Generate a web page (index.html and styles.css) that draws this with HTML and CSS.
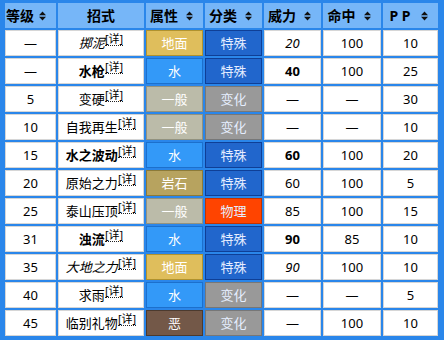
FILE: index.html
```html
<!DOCTYPE html>
<html lang="zh">
<head>
<meta charset="utf-8">
<link rel="stylesheet" href="styles.css">
</head>
<body>
<table class="moves">
<colgroup>
<col class="c1"><col class="c2"><col class="c3"><col class="c4"><col class="c5"><col class="c6"><col class="c7">
</colgroup>
<thead>
<tr>
<th><div class="hd"><span class="ht">等级</span><svg class="sort" viewBox="0 0 7 10" width="7" height="10"><path d="M0 4.3L3.5 0.5L7 4.3Z M0 5.7L3.5 9.5L7 5.7Z"/></svg></div></th>
<th><div class="hd plain"><span class="ht">招式</span></div></th>
<th><div class="hd"><span class="ht">属性</span><svg class="sort" viewBox="0 0 7 10" width="7" height="10"><path d="M0 4.3L3.5 0.5L7 4.3Z M0 5.7L3.5 9.5L7 5.7Z"/></svg></div></th>
<th><div class="hd"><span class="ht">分类</span><svg class="sort" viewBox="0 0 7 10" width="7" height="10"><path d="M0 4.3L3.5 0.5L7 4.3Z M0 5.7L3.5 9.5L7 5.7Z"/></svg></div></th>
<th><div class="hd"><span class="ht">威力</span><svg class="sort" viewBox="0 0 7 10" width="7" height="10"><path d="M0 4.3L3.5 0.5L7 4.3Z M0 5.7L3.5 9.5L7 5.7Z"/></svg></div></th>
<th><div class="hd"><span class="ht">命中</span><svg class="sort" viewBox="0 0 7 10" width="7" height="10"><path d="M0 4.3L3.5 0.5L7 4.3Z M0 5.7L3.5 9.5L7 5.7Z"/></svg></div></th>
<th><div class="hd"><span class="ht pp">P P</span><svg class="sort" viewBox="0 0 7 10" width="7" height="10"><path d="M0 4.3L3.5 0.5L7 4.3Z M0 5.7L3.5 9.5L7 5.7Z"/></svg></div></th>
</tr>
</thead>
<tbody>
<tr><td>—</td><td><i>掷泥</i><span class="det">[详]</span></td><td class="t ground">地面</td><td class="k special">特殊</td><td><i>20</i></td><td>100</td><td>10</td></tr>
<tr><td>—</td><td><b>水枪</b><span class="det">[详]</span></td><td class="t water">水</td><td class="k special">特殊</td><td><b>40</b></td><td>100</td><td>25</td></tr>
<tr><td>5</td><td>变硬<span class="det">[详]</span></td><td class="t normal">一般</td><td class="k status">变化</td><td>—</td><td>—</td><td>30</td></tr>
<tr><td>10</td><td>自我再生<span class="det">[详]</span></td><td class="t normal">一般</td><td class="k status">变化</td><td>—</td><td>—</td><td>10</td></tr>
<tr><td>15</td><td><b>水之波动</b><span class="det">[详]</span></td><td class="t water">水</td><td class="k special">特殊</td><td><b>60</b></td><td>100</td><td>20</td></tr>
<tr><td>20</td><td>原始之力<span class="det">[详]</span></td><td class="t rock">岩石</td><td class="k special">特殊</td><td>60</td><td>100</td><td>5</td></tr>
<tr><td>25</td><td>泰山压顶<span class="det">[详]</span></td><td class="t normal">一般</td><td class="k physical">物理</td><td>85</td><td>100</td><td>15</td></tr>
<tr><td>31</td><td><b>浊流</b><span class="det">[详]</span></td><td class="t water">水</td><td class="k special">特殊</td><td><b>90</b></td><td>85</td><td>10</td></tr>
<tr><td>35</td><td><i>大地之力</i><span class="det">[详]</span></td><td class="t ground">地面</td><td class="k special">特殊</td><td><i>90</i></td><td>100</td><td>10</td></tr>
<tr><td>40</td><td>求雨<span class="det">[详]</span></td><td class="t water">水</td><td class="k status">变化</td><td>—</td><td>—</td><td>5</td></tr>
<tr><td>45</td><td>临别礼物<span class="det">[详]</span></td><td class="t dark">恶</td><td class="k status">变化</td><td>—</td><td>100</td><td>10</td></tr>
</tbody>
</table>
</body>
</html>
```
FILE: styles.css
```css
html, body {
  margin: 0;
  padding: 0;
  background: #ffffff;
}
body {
  font-family: "Noto Sans", "Noto Sans CJK SC", sans-serif;
  font-size: 13px;
  color: #000;
}
.moves {
  width: 444px;
  table-layout: fixed;
  border-collapse: separate;
  border-spacing: 2px;
  padding: 1px 4px 2px 3px;
  background: #2a86ea;
}
.c1 { width: 51px; }
.c2 { width: 86px; }
.c3 { width: 57px; }
.c4 { width: 57px; }
.c5 { width: 57px; }
.c6 { width: 58px; }
.c7 { width: 55px; }
th {
  box-sizing: border-box;
  height: 25px;
  padding: 0;
  background: #76b6f8;
  font-size: 14px;
  font-weight: bold;
}
.hd {
  display: flex;
  align-items: center;
  height: 25px;
}
.ht {
  flex: 1;
  text-align: center;
  line-height: 25px;
}
.pp {
  letter-spacing: 0;
}
.sort {
  flex: none;
  width: 7px;
  height: 10px;
  margin: 0 10px 0 4px;
  fill: #111;
}
td {
  box-sizing: border-box;
  height: 26px;
  padding: 0;
  border: 1px solid #d6d6d6;
  background: #ffffff;
  text-align: center;
  vertical-align: middle;
  line-height: 24px;
  white-space: nowrap;
}
.det {
  display: inline-block;
  font-size: 11px;
  line-height: 12px;
  vertical-align: 5px;
  border-bottom: 1px dotted #222;
}
td.t { color: #ffffff; }
td.k { color: #e6eeff; }
.ground { background: #dfbe5c; border-color: #b0922e; }
.water { background: #3399f8; border-color: #1c70cc; }
.normal { background: #bbbba9; border-color: #92927f; }
.rock { background: #b7a35f; border-color: #8c7a38; }
.dark { background: #735848; border-color: #4c3a2e; }
.special { background: #2166cc; border-color: #0f3f96; }
.status { background: #999999; border-color: #777777; color: #f0f0f0; }
.physical { background: #ff4400; border-color: #c23200; color: #ffd700; }
```
